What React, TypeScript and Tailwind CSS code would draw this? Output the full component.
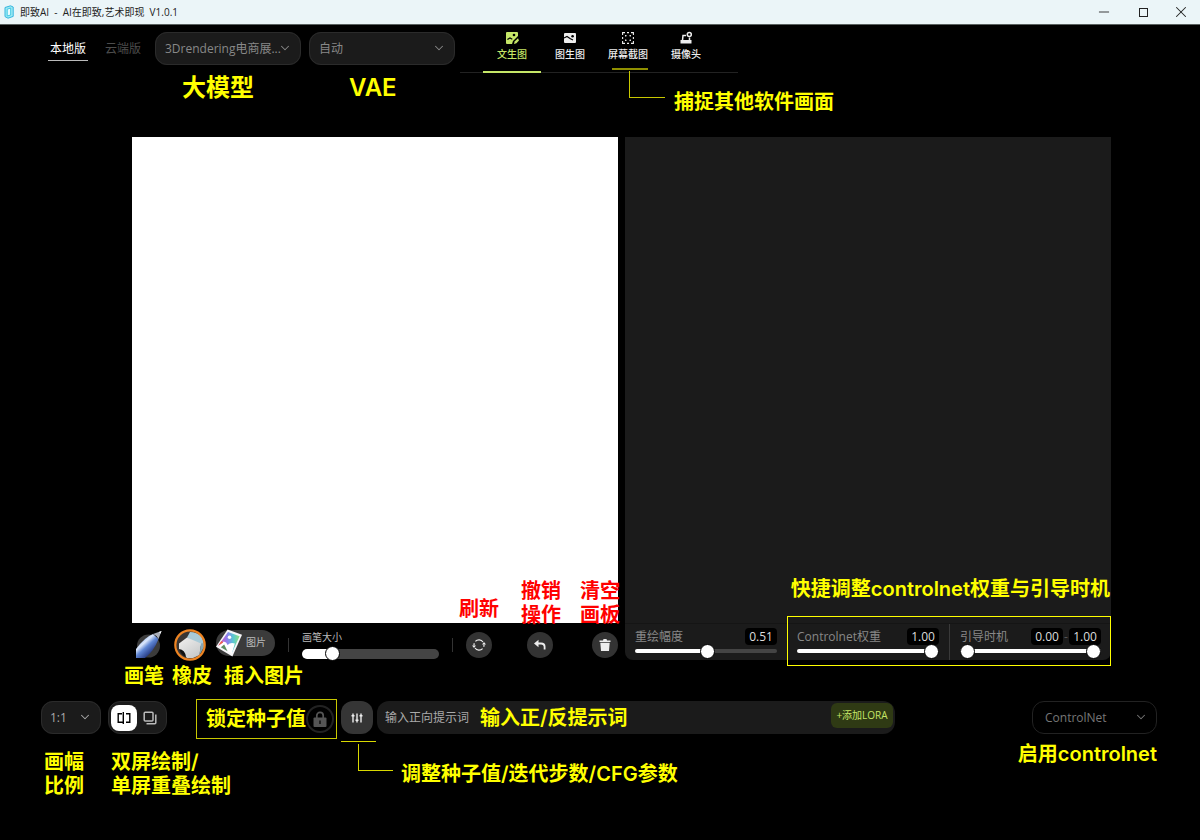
import { useState } from "react";
import type { ReactNode } from "react";
import { ChevronDown, Minus, X } from "lucide-react";

const thumb =
  "[&::-webkit-slider-thumb]:appearance-none [&::-webkit-slider-thumb]:size-[15px] [&::-webkit-slider-thumb]:rounded-full [&::-webkit-slider-thumb]:border [&::-webkit-slider-thumb]:border-black [&::-webkit-slider-thumb]:bg-white";

function fill(value: number, rest: string) {
  return { backgroundImage: `linear-gradient(to right, #fff ${value * 100}%, ${rest} ${value * 100}%)` };
}

function Note({ className, children }: { className: string; children: ReactNode }) {
  return (
    <span
      className={`pointer-events-none absolute z-10 whitespace-nowrap font-['Inter','Noto_Sans_CJK_SC',sans-serif] font-semibold ${className}`}
    >
      {children}
    </span>
  );
}

function Select({ label, value, className, chevron }: { label: string; value: string; className: string; chevron: string }) {
  return (
    <div className={`relative h-[33px] shrink-0 rounded-xl ${className}`}>
      <select
        aria-label={label}
        className="h-full w-full appearance-none rounded-xl border border-inherit bg-inherit pr-3 pl-[var(--pad)] text-xs text-inherit outline-none"
      >
        <option>{value}</option>
      </select>
      <ChevronDown className={`pointer-events-none absolute top-[9px] size-[14px] ${chevron}`} strokeWidth={1.8} />
    </div>
  );
}

function TextToImageIcon() {
  return (
    <svg viewBox="0 0 14 14" className="size-[14px]" fill="currentColor">
      <path d="M2 1h10a1 1 0 0 1 1 1v3L8 10l-1 3H2a1 1 0 0 1-1-1V2a1 1 0 0 1 1-1Z" />
      <path d="M13 7.2 9.6 10.6 9 13l2.4-.7L14 9.4" />
      <path d="m2.4 8.500 2.600-1.500 2.300 1.200" fill="none" stroke="#000" strokeWidth="1.2" />
      <circle cx="9" cy="4" r="1.3" fill="#000" />
    </svg>
  );
}

function ImageToImageIcon() {
  return (
    <svg viewBox="0 0 14 14" className="size-[14px]" fill="currentColor">
      <rect x="1" y="2" width="12" height="10" rx="1" />
      <path d="m1 7 3-1.500 3.400 2.300L10 9" fill="none" stroke="#000" strokeWidth="1.1" />
      <circle cx="9.6" cy="5.2" r="1.3" fill="#000" />
    </svg>
  );
}

function CaptureIcon() {
  return (
    <svg viewBox="0 0 14 14" className="size-[14px]" fill="none" stroke="currentColor" strokeWidth="1.1">
      <path d="M1.600 4V1.600H4M10 1.600h2.400V4M12.400 10v2.400H10M4 12.400H1.600V10" />
      <path d="M6 1.600h2M6 12.400h2M1.600 6v2M12.400 6v2" />
      <path d="M4.600 5.500V4.600h.9M8.500 4.600h.9v.9M9.400 8.500v.9h-.9M5.500 9.400h-.9v-.9" />
    </svg>
  );
}

function CameraIcon() {
  return (
    <svg viewBox="0 0 14 14" className="size-[14px]" fill="none" stroke="currentColor" strokeWidth="1.5">
      <path d="M7 4.500H4L3.500 9.500M10.500 6.500v3" />
      <circle cx="10.300" cy="3.500" r="2" />
      <path d="M1.500 9h11v3.500h-11z" fill="currentColor" stroke="none" />
    </svg>
  );
}

const modes = [
  { name: "文生图", icon: <TextToImageIcon />, active: true },
  { name: "图生图", icon: <ImageToImageIcon />, active: false },
  { name: "屏幕截图", icon: <CaptureIcon />, active: false },
  { name: "摄像头", icon: <CameraIcon />, active: false },
];

function TitleBar() {
  return (
    <header className="flex h-[25px] items-center border-b border-[#59605f] bg-[#ebf5f8] text-[#222]">
      <svg viewBox="0 0 10 14" className="ml-1 h-[14px] w-[10px]" fill="none">
        <path d="M1 2.5 6.5.8 9.2 2v9.4L4 13.2 1 11.6Z" fill="#9eeaf3" stroke="#35b5df" />
        <path d="M3.2 4.2 6.7 3v7l-3.5 1Z" fill="#eafcff" stroke="#42c9e6" />
      </svg>
      <h1 className="ml-1.5 text-[10px] whitespace-pre">{"即致AI  -  AI在即致,艺术即现  V1.0.1"}</h1>
      <div className="ml-auto flex">
        <button aria-label="最小化" className="flex h-6 w-10 items-center justify-center">
          <Minus className="size-4" strokeWidth={1.3} />
        </button>
        <button aria-label="最大化" className="flex h-6 w-[38px] items-center justify-center">
          <span className="size-[9px] border border-[#222]" />
        </button>
        <button aria-label="关闭" className="flex h-6 w-[38px] items-center justify-center">
          <X className="size-[18px]" strokeWidth={1.4} />
        </button>
      </div>
    </header>
  );
}

function Toolbar() {
  return (
    <div className="flex h-12 items-start pl-12">
      <a href="#local" className="mt-[11px] flex h-[25px] w-10 justify-center border-b border-[#bbb] pt-[5px] text-xs leading-4 whitespace-nowrap text-white">
        本地版
      </a>
      <a href="#cloud" className="mt-[11px] ml-[17px] w-9 pt-[5px] text-xs leading-4 whitespace-nowrap text-[#4c4c4c]">
        云端版
      </a>
      <div className="relative mt-[7px] ml-[14px]">
        <Select label="大模型" value="3Drendering电商展..." className="w-[146px] border-[#2b2b2b] bg-[#1b1b1b] text-[#888] [--pad:9px]" chevron="right-[9px]" />
        <Note className="top-10 left-[27px] text-2xl text-[#ff0]">大模型</Note>
      </div>
      <div className="relative mt-[7px] ml-2">
        <Select label="VAE" value="自动" className="w-[146px] border-[#2b2b2b] bg-[#1b1b1b] text-[#888] [--pad:9px]" chevron="right-[9px]" />
        <Note className="top-10 left-10 text-2xl text-[#ff0]">VAE</Note>
      </div>
      <nav className="ml-[5px] flex h-12 border-b border-[#222] px-[23px]">
        {modes.map((m) => (
          <button
            key={m.name}
            className={`relative flex h-12 w-[58px] flex-col items-center border-b-2 pt-1.5 text-[10px] leading-4 font-medium whitespace-nowrap ${
              m.active ? "border-[#c5e667] text-[#c5e667]" : "border-transparent text-[#eee]"
            }`}
          >
            {m.icon}
            <span className="mt-px">{m.name}</span>
            {m.name === "屏幕截图" && (
              <>
                <span className="absolute top-[43px] left-[13px] h-0.5 w-9 bg-[#8f8f00]" />
                <span className="absolute top-[46px] left-[30px] h-[27px] w-9 border-b border-l border-[#c8c800]" />
                <Note className="top-[63px] left-[75px] text-xl/7 text-[#ff0]">捕捉其他软件画面</Note>
              </>
            )}
          </button>
        ))}
      </nav>
    </div>
  );
}

function RoundButton({ label, className, children, note }: { label: string; className: string; children: ReactNode; note: ReactNode }) {
  return (
    <div className={`relative shrink-0 ${className}`}>
      <button aria-label={label} className="flex size-[26px] items-center justify-center rounded-full bg-[#333] text-[#eee]">
        {children}
      </button>
      {note}
    </div>
  );
}

function DrawTools() {
  const [size, setSize] = useState(0.19);
  return (
    <div className="flex h-[38px] items-center pt-[5px] pl-1">
      <div className="relative">
        <button aria-label="画笔" className="block">
          <svg viewBox="0 0 26 28" className="h-7 w-[26px]">
            <defs>
              <linearGradient id="pen" x1="0.2" y1="0.2" x2="0.7" y2="0.8">
                <stop offset="0" stopColor="#8fb0e8" />
                <stop offset="0.3" stopColor="#dbe7fb" />
                <stop offset="0.55" stopColor="#5f86d4" />
                <stop offset="1" stopColor="#22357d" />
              </linearGradient>
            </defs>
            <circle cx="12.500" cy="15" r="11.500" fill="#3b3b3b" />
            <path d="M0 18Q9 6 17 3L22.500 8Q18 20 9 27H0Z" fill="url(#pen)" />
            <path d="M17 3 25.500 0 22.500 8Q21 4.500 17 3Z" fill="#a8adb8" />
            <path d="M23 1 25.500 0l-1 2.800Z" fill="#fff" />
          </svg>
        </button>
        <Note className="top-[31px] -left-3 text-xl/7 text-[#ff0]">画笔</Note>
      </div>
      <div className="relative ml-3">
        <button aria-label="橡皮" className="block">
          <svg viewBox="0 0 32 32" className="size-8">
            <defs>
              <linearGradient id="eraser" x1="0" y1="0" x2="0.7" y2="1">
                <stop offset="0" stopColor="#f1f0ef" />
                <stop offset="1" stopColor="#c8cacb" />
              </linearGradient>
            </defs>
            <circle cx="16" cy="16" r="14.500" fill="#393634" />
            <path d="M16 3Q23 3 28 8L30 15 26 17 13 8.500Z" fill="#a9cbd8" />
            <path d="M13 8.500 27 14.500 25.500 26 19 29H13L5 20V14.500Z" fill="url(#eraser)" />
            <path d="m27 14.500 3-.5v4l-4.500 8Z" fill="#86a7b5" />
            <path d="M5 20Q11 20.500 12 28Q7 26 5 20Z" fill="#111" />
            <circle cx="16" cy="16" r="14.700" fill="none" stroke="#ee8422" strokeWidth="2.200" />
          </svg>
        </button>
        <Note className="top-[33px] -left-0.5 text-xl/7 text-[#ff0]">橡皮</Note>
      </div>
      <div className="relative ml-2.5">
        <button className="flex h-[26px] w-[59px] -translate-y-0.5 items-center rounded-full bg-[#3b3b3b] text-[10px] text-[#bbb]">
          <svg viewBox="0 0 28 28" className="h-7 w-[27px]">
            <defs>
              <linearGradient id="photo" x1="0" y1="0.500" x2="1" y2="0.500">
                <stop offset="0" stopColor="#e04fa8" />
                <stop offset="0.400" stopColor="#8f7df0" />
                <stop offset="0.700" stopColor="#58c9d2" />
                <stop offset="1" stopColor="#8fe07d" />
              </linearGradient>
            </defs>
            <path d="M12 0 27 5.500 17 28 0 18Z" fill="#f6f6f8" />
            <path d="M12.500 2.500 24.500 7 16.500 24 2.500 16.500Z" fill="url(#photo)" />
            <circle cx="14" cy="8" r="1.800" fill="#fff" />
            <path d="M2.500 17 8 12.500q3 .5 4 3.500 3-3 7.500-1.500L16.500 25Z" fill="#fff" />
            <path d="m5 18.500 3.500-3 3.500 7Z" fill="#5e8f62" />
            <path d="m2.500 16.500 3-4.500 2 1.500Z" fill="#ee5e4a" />
          </svg>
          <span className="ml-[3px]">图片</span>
        </button>
        <Note className="top-[30px] left-2 text-xl/7 text-[#ff0]">插入图片</Note>
      </div>
      <span className="mx-[13px] h-3.5 w-px shrink-0 bg-[#333]" />
      <label className="flex flex-1 flex-col text-[10px] leading-3 text-[#bbb]">
        画笔大小
        <input
          type="range"
          min={0}
          max={1}
          step={0.01}
          value={size}
          onChange={(e) => setSize(Number(e.target.value))}
          style={fill(0.05 + size * 0.9, "#444")}
          className={`mt-1.5 h-2.5 w-full appearance-none rounded-full ${thumb}`}
        />
      </label>
      <span className="mx-[13px] h-3.5 w-px shrink-0 bg-[#333]" />
      <RoundButton label="刷新" className="" note={<Note className="-top-[35px] -left-[7px] text-xl/6 text-[#f00]">刷新</Note>}>
        <svg viewBox="0 0 14 14" className="size-[14px]" fill="none" stroke="currentColor" strokeWidth="1.2">
          <path d="M3.400 3.400a5 5 0 0 1 7.600.600M2 7.500a5 5 0 0 1 .3-2.200M10.600 10.600a5 5 0 0 1-7.600-.6M12 6.500a5 5 0 0 1-.3 2.200" />
          <path d="M10 6.500h4l-2-2.500ZM0 7.500h4l-2 2.500Z" fill="currentColor" stroke="none" />
        </svg>
      </RoundButton>
      <RoundButton
        label="撤销操作"
        className="ml-[35px]"
        note={<Note className="-top-[53px] -left-1.5 text-xl/6 text-[#f00]">撤销<br />操作</Note>}
      >
        <svg viewBox="0 0 14 14" className="size-[14px]" fill="currentColor">
          <path d="M1 5.500 5.500 1.800V4.600H8q4.500 0 4.500 4.200V11.500H10.700V9Q10.700 6.500 8 6.500H5.500V9.200Z" />
        </svg>
      </RoundButton>
      <RoundButton
        label="清空画板"
        className="ml-[39px]"
        note={<Note className="-top-[53px] -left-3 text-xl/6 text-[#f00]">清空<br />画板</Note>}
      >
        <svg viewBox="0 0 14 14" className="size-[14px]" fill="currentColor">
          <path d="M1.500 2.500H5L5.500 1h3L9 2.500h3.500V4h-11ZM2.300 4.800h9.400L11 13H3Z" />
        </svg>
      </RoundButton>
    </div>
  );
}

function Value({ children }: { children: ReactNode }) {
  return <output className="w-8 rounded-sm bg-black text-center leading-[17px] text-[#ddd]">{children}</output>;
}

function WeightSlider({ label, initial }: { label: string; initial: number }) {
  const [value, setValue] = useState(initial);
  return (
    <label className="flex flex-col px-2.5 pt-1 text-xs leading-[17px] text-[#888]">
      <span className="flex justify-between">
        {label}
        <Value>{value.toFixed(2)}</Value>
      </span>
      <input
        type="range"
        min={0}
        max={1}
        step={0.01}
        value={value}
        onChange={(e) => setValue(Number(e.target.value))}
        style={fill(0.05 + value * 0.9, "#444")}
        className={`mt-1 h-1 w-full appearance-none rounded-full ${thumb}`}
      />
    </label>
  );
}

function RangeSlider() {
  const [from, setFrom] = useState(0);
  const [to, setTo] = useState(1);
  const layer = `pointer-events-none col-start-1 row-start-1 h-1 w-full appearance-none rounded-full [&::-webkit-slider-thumb]:pointer-events-auto ${thumb}`;
  return (
    <div className="flex flex-col border-l border-[#3a3a3a] px-2.5 pt-1 text-xs leading-[17px] text-[#888]">
      <span className="flex">
        <span className="mr-auto">引导时机</span>
        <Value>{from.toFixed(2)}</Value>
        <span className="w-1.5 text-center text-[#555]">-</span>
        <Value>{to.toFixed(2)}</Value>
      </span>
      <div className="mt-1 grid">
        <input type="range" aria-label="引导开始" min={0} max={1} step={0.01} value={from} onChange={(e) => setFrom(Math.min(Number(e.target.value), to))} className={`bg-white ${layer}`} />
        <input type="range" aria-label="引导结束" min={0} max={1} step={0.01} value={to} onChange={(e) => setTo(Math.max(Number(e.target.value), from))} className={`bg-transparent ${layer}`} />
      </div>
    </div>
  );
}

function Workspace() {
  return (
    <main className="flex gap-[7px] pt-16 pr-[89px] pl-[132px]">
      <section className="min-w-0 flex-1">
        <div className="aspect-square bg-white" />
        <DrawTools />
      </section>
      <section className="relative min-w-0 flex-1 self-start rounded-b-lg bg-[#1b1b1b]">
        <div className="aspect-square" />
        <div className="grid h-[37px] grid-cols-3 border-t border-[#151515]">
          <WeightSlider label="重绘幅度" initial={0.51} />
          <WeightSlider label="Controlnet权重" initial={1} />
          <RangeSlider />
        </div>
        <Note className="right-px bottom-[57px] text-xl/7 text-[#ff0]">快捷调整controlnet权重与引导时机</Note>
        <span className="pointer-events-none absolute right-0 -bottom-1.5 left-1/3 h-[50px] border border-[#ff0]" />
      </section>
    </main>
  );
}

function PromptBar() {
  return (
    <footer className="mt-10 flex items-start pr-[43px] pb-20 pl-[41px]">
      <div className="relative">
        <Select label="画幅比例" value="1:1" className="w-[60px] border-[#2b2b2b] bg-[#1b1b1b] text-[#aaa] [--pad:8px]" chevron="right-[9px]" />
        <Note className="top-[49px] left-[3px] text-xl/6 text-[#ff0]">画幅<br />比例</Note>
      </div>
      <div className="relative ml-[7px] flex h-[33px] w-[59px] items-center rounded-xl border border-[#2b2b2b] bg-[#1b1b1b] px-0.5">
        <button aria-label="双屏绘制" className="flex size-[26px] shrink-0 items-center justify-center rounded-lg bg-white text-black">
          <svg viewBox="0 0 14 14" className="size-[14px]" fill="none" stroke="currentColor" strokeWidth="1.4">
            <path d="M5 2.800H1.200v8.400H7M9 2.800h3.800v8.400H9M6.300 1v12" />
          </svg>
        </button>
        <button aria-label="单屏重叠绘制" className="flex size-[26px] shrink-0 items-center justify-center text-[#bbb]">
          <svg viewBox="0 0 14 14" className="size-[14px]" fill="none" stroke="currentColor" strokeWidth="1.5">
            <rect x="1.200" y="1.200" width="8.800" height="8.800" rx="1" />
            <path d="M12.800 3.500v8.300q0 1-1 1H3.500" />
          </svg>
        </button>
        <Note className="top-12 left-0.5 text-xl/6 text-[#ff0]">双屏绘制/<br />单屏重叠绘制</Note>
      </div>
      <div className="relative -mt-0.5 ml-[29px] flex h-10 w-[141px] items-center justify-end border border-[#c8c800] pr-0.5">
        <Note className="top-[5px] left-[9px] text-xl/7 text-[#ff0]">锁定种子值</Note>
        <button aria-label="锁定种子值" className="flex size-7 items-center justify-center rounded-full border-2 border-[#222] text-[#555]">
          <svg viewBox="0 0 14 16" className="h-4 w-[14px]" fill="currentColor">
            <path d="M3.800 7V4.500a3.200 3.200 0 0 1 6.400 0V7" fill="none" stroke="currentColor" strokeWidth="1.700" />
            <rect x="0.500" y="6.500" width="13" height="9.500" rx="1" />
            <path d="M7 9.500v3.500" stroke="#111" strokeWidth="1.500" />
          </svg>
        </button>
      </div>
      <div className="relative ml-1">
        <button aria-label="参数设置" className="flex h-[33px] w-8 items-center justify-center rounded-xl bg-[#353535] text-[#eee]">
          <svg viewBox="0 0 14 12" className="h-3 w-[14px]" fill="none" stroke="currentColor" strokeWidth="1.400">
            <path d="M3 1.500v9M7 1.500v9M11 1.500v9M1.500 3.800h3M5.500 8.300h3M9.500 3.800h3" />
          </svg>
        </button>
        <span className="absolute top-10 left-0 h-px w-[35px] bg-[#d8d800]" />
        <span className="absolute top-[43px] left-[17px] h-[27px] w-[35px] border-b border-l border-[#d8d800]" />
        <Note className="top-[59px] left-[60px] text-xl/7 text-[#ff0]">调整种子值/迭代步数/CFG参数</Note>
      </div>
      <div className="relative mr-[137px] ml-1 flex h-[33px] min-w-0 flex-1 rounded-xl bg-[#1b1b1b]">
        <input aria-label="正向提示词" placeholder="输入正向提示词" className="min-w-0 flex-1 bg-transparent pl-2 text-xs text-white outline-none placeholder:text-[#aaa]" />
        <button className="mt-0.5 mr-0.5 h-[25px] w-[62px] rounded-md bg-[#2f3a14] text-[10px] whitespace-nowrap text-[#c5e667]">+添加LORA</button>
        <Note className="top-[3px] left-[103px] text-xl/7 text-[#ff0]">输入正/反提示词</Note>
      </div>
      <div className="relative">
        <Select label="ControlNet" value="ControlNet" className="w-[125px] border-[#222] bg-black text-[#777] [--pad:12px]" chevron="right-[9px] text-[#777]" />
        <Note className="top-[39px] right-0 text-xl/7 text-[#ff0]">启用controlnet</Note>
      </div>
    </footer>
  );
}

export default function App() {
  return (
    <div className="min-h-screen overflow-hidden bg-black font-['Open_Sans','Noto_Sans_CJK_SC',sans-serif] text-[#888]">
      <TitleBar />
      <Toolbar />
      <Workspace />
      <PromptBar />
    </div>
  );
}
